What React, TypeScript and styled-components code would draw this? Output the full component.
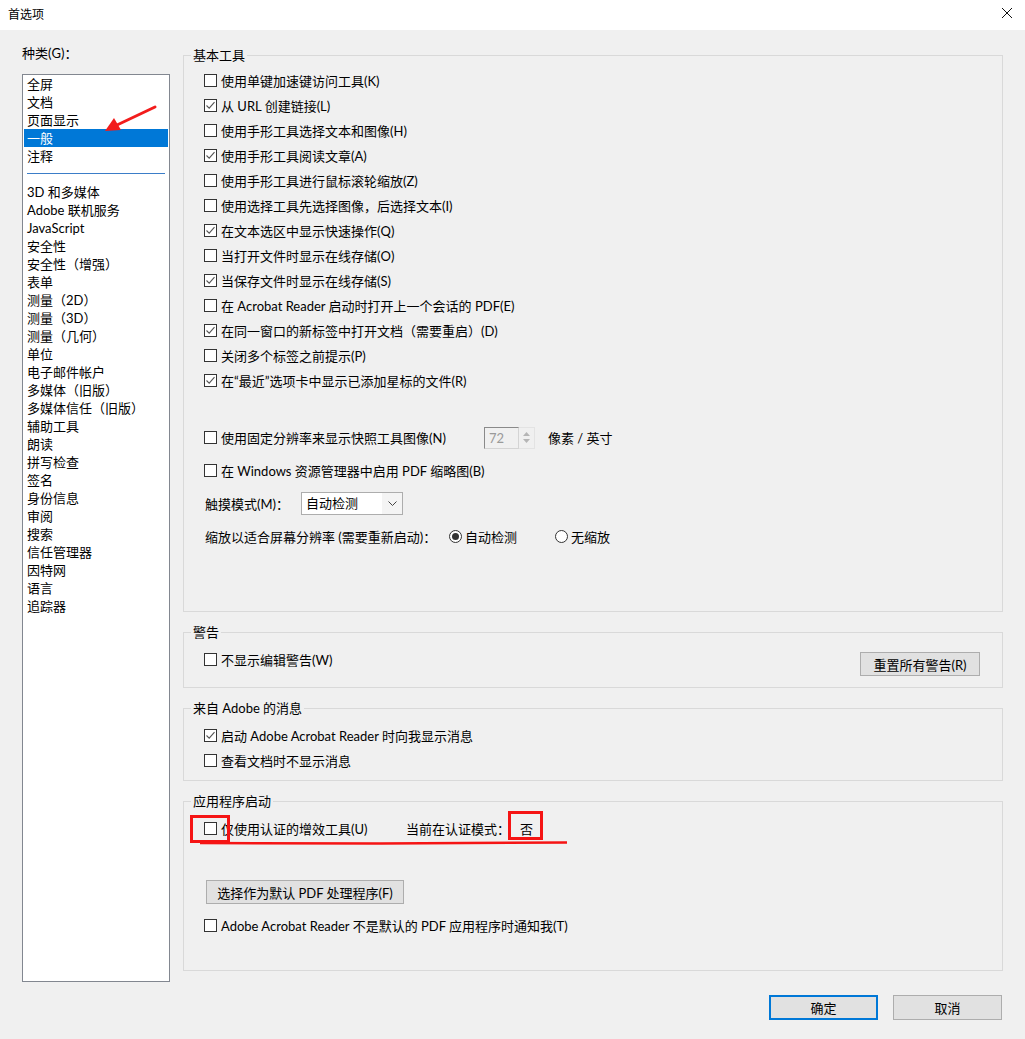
import React from "react";
import styled, { createGlobalStyle } from "styled-components";

const topCategories = ["全屏", "文档", "页面显示", "一般", "注释"];
const moreCategories = [
    "3D 和多媒体", "Adobe 联机服务", "JavaScript", "安全性", "安全性（增强）", "表单",
    "测量（2D）", "测量（3D）", "测量（几何）", "单位", "电子邮件帐户", "多媒体（旧版）",
    "多媒体信任（旧版）", "辅助工具", "朗读", "拼写检查", "签名", "身份信息", "审阅",
    "搜索", "信任管理器", "因特网", "语言", "追踪器",
];

const basicTools: [string, boolean][] = [
    ["使用单键加速键访问工具(K)", false],
    ["从 URL 创建链接(L)", true],
    ["使用手形工具选择文本和图像(H)", false],
    ["使用手形工具阅读文章(A)", true],
    ["使用手形工具进行鼠标滚轮缩放(Z)", false],
    ["使用选择工具先选择图像，后选择文本(I)", false],
    ["在文本选区中显示快速操作(Q)", true],
    ["当打开文件时显示在线存储(O)", false],
    ["当保存文件时显示在线存储(S)", true],
    ["在 Acrobat Reader 启动时打开上一个会话的 PDF(E)", false],
    ["在同一窗口的新标签中打开文档（需要重启）(D)", true],
    ["关闭多个标签之前提示(P)", false],
    ["在“最近”选项卡中显示已添加星标的文件(R)", true],
];

const CheckBox = ({ checked }: { checked?: boolean }) => (
    <StyledBox>
        {checked && (
            <svg width="11" height="11" viewBox="0 0 11 11">
                <polyline points="1.5,5.5 4.2,8.2 9.5,2.2" fill="none" stroke="#555" strokeWidth="1.1" />
            </svg>
        )}
    </StyledBox>
);

const Check = ({ label, checked, width }: { label: string; checked?: boolean; width?: number }) => (
    <CheckLabel $width={width}>
        <CheckBox checked={checked} />
        <span>{label}</span>
    </CheckLabel>
);

const Radio = ({ label, checked, width }: { label: string; checked?: boolean; width?: number }) => (
    <RadioLabel $width={width}>
        <RadioCircle>{checked && <RadioDot />}</RadioCircle>
        <span>{label}</span>
    </RadioLabel>
);

export default () => {
    return (
        <Page>
            <GlobalStyle />
            <TitleBar>
                <span>首选项</span>
                <svg width="12" height="12" viewBox="0 0 12 12" className="close">
                    <path d="M1 1 L11 11 M11 1 L1 11" stroke="#111" strokeWidth="1" />
                </svg>
            </TitleBar>

            <Body>
                <Sidebar>
                    <SideLabel>种类(G)：</SideLabel>
                    <CategoryList>
                        {topCategories.map(c => (
                            <CategoryItem key={c} $selected={c === "一般"}>{c}</CategoryItem>
                        ))}
                        <Divider />
                        {moreCategories.map(c => (
                            <CategoryItem key={c}>{c}</CategoryItem>
                        ))}
                    </CategoryList>
                </Sidebar>

                <Content>
                    <Group>
                        <Legend>基本工具</Legend>
                        <GroupBody $height={547}>
                            {basicTools.map(([label, checked]) => (
                                <Row key={label}>
                                    <Check label={label} checked={checked} />
                                </Row>
                            ))}
                            <Spacer $h={28} />
                            <Row $h={33}>
                                <Check label="使用固定分辨率来显示快照工具图像(N)" width={280} />
                                <SpinBox>
                                    <SpinInput>72</SpinInput>
                                    <SpinArrows>
                                        <svg width="7" height="4" viewBox="0 0 7 4"><polygon points="0,4 7,4 3.5,0" fill="#b5b5b5" /></svg>
                                        <svg width="7" height="4" viewBox="0 0 7 4"><polygon points="0,0 7,0 3.5,4" fill="#b5b5b5" /></svg>
                                    </SpinArrows>
                                </SpinBox>
                                <UnitText>像素 / 英寸</UnitText>
                            </Row>
                            <Row $h={33}>
                                <Check label="在 Windows 资源管理器中启用 PDF 缩略图(B)" />
                            </Row>
                            <Row $h={33}>
                                <FieldLabel $width={97}>触摸模式(M)：</FieldLabel>
                                <SelectBox>
                                    <span className="value">自动检测</span>
                                    <span className="arrow">
                                        <svg width="9" height="5" viewBox="0 0 9 5">
                                            <polyline points="0.5,0.5 4.5,4.5 8.5,0.5" fill="none" stroke="#444" strokeWidth="1" />
                                        </svg>
                                    </span>
                                </SelectBox>
                            </Row>
                            <Row $h={33}>
                                <FieldLabel $width={245}>缩放以适合屏幕分辨率 (需要重新启动)：</FieldLabel>
                                <Radio label="自动检测" checked width={106} />
                                <Radio label="无缩放" />
                            </Row>
                        </GroupBody>
                    </Group>

                    <Group>
                        <Legend>警告</Legend>
                        <GroupBody $height={46} $pad={6}>
                            <SplitRow>
                                <Row>
                                    <Check label="不显示编辑警告(W)" />
                                </Row>
                                <Button $width={120}>重置所有警告(R)</Button>
                            </SplitRow>
                        </GroupBody>
                    </Group>

                    <Group>
                        <Legend>来自 Adobe 的消息</Legend>
                        <GroupBody $height={63} $pad={6}>
                            <Row><Check label="启动 Adobe Acrobat Reader 时向我显示消息" checked /></Row>
                            <Row><Check label="查看文档时不显示消息" /></Row>
                        </GroupBody>
                    </Group>

                    <Group>
                        <Legend>应用程序启动</Legend>
                        <GroupBody $height={160} $pad={6}>
                            <Row>
                                <Check label="仅使用认证的增效工具(U)" width={201} />
                                <FieldLabel $width={115}>当前在认证模式：</FieldLabel>
                                <span>否</span>
                            </Row>
                            <Button $width={198} className="defaultHandler">选择作为默认 PDF 处理程序(F)</Button>
                            <Row className="notify">
                                <Check label="Adobe Acrobat Reader 不是默认的 PDF 应用程序时通知我(T)" />
                            </Row>
                        </GroupBody>
                    </Group>
                </Content>
            </Body>

            <Footer>
                <Button $width={109} $height={25} $primary>确定</Button>
                <Button $width={109} $height={25}>取消</Button>
            </Footer>

            <Annotations width="1025" height="1039" viewBox="0 0 1025 1039">
                <line x1="155" y1="107" x2="117" y2="125" stroke="#f21c1c" strokeWidth="3" strokeLinecap="round" />
                <polygon points="105,131 121,130 114,118" fill="#f21c1c" />
                <rect x="191.5" y="816.5" width="37" height="25" fill="none" stroke="#f51414" strokeWidth="3" />
                <rect x="509.5" y="812.5" width="32" height="26" fill="none" stroke="#f51414" strokeWidth="3" />
                <path d="M200 843 L380 843.5 L567 842.5" fill="none" stroke="#f51414" strokeWidth="2.5" />
            </Annotations>
        </Page>
    );
};

const GlobalStyle = createGlobalStyle`
    html, body {
        margin: 0;
        padding: 0;
        background: #f0f0f0;
    }
    body {
        font-family: Lato, "Noto Sans CJK SC", sans-serif;
        font-size: 13px;
        color: #000;
    }
`;

const Page = styled.div`
    position: relative;
    width: 1025px;
    height: 1039px;
    overflow: hidden;
    background: #f0f0f0;
    line-height: 18px;
`;

const TitleBar = styled.div`
    height: 30px;
    background: #fff;
    display: flex;
    align-items: center;
    justify-content: space-between;
    padding: 0 12px 0 8px;
    box-sizing: border-box;
    font-size: 12px;
    .close{
        margin-top: -4px;
    }
`;

const Body = styled.div`
    display: flex;
    align-items: flex-start;
    gap: 13px;
    padding: 14px 0 0 22px;
`;

const Sidebar = styled.div`
    width: 148px;
    display: flex;
    flex-flow: column nowrap;
`;

const SideLabel = styled.div`
    height: 18px;
    margin-bottom: 12px;
`;

const CategoryList = styled.div`
    height: 908px;
    box-sizing: border-box;
    background: #fff;
    border: 1px solid #828790;
`;

const CategoryItem = styled.div<{ $selected?: boolean }>`
    height: 18px;
    line-height: 18px;
    margin: 0 1px;
    padding-left: 3px;
    white-space: nowrap;
    background: ${({ $selected }) => ($selected ? "#0078d7" : "transparent")};
    color: ${({ $selected }) => ($selected ? "#fff" : "#000")};
`;

const Divider = styled.div`
    height: 18px;
    display: flex;
    align-items: center;
    padding: 0 4px;
    &::after{
        content: "";
        flex: 1;
        height: 1px;
        margin-top: -2px;
        background: #3b7dc8;
    }
`;

const Content = styled.div`
    width: 820px;
    margin-top: 2px;
    display: flex;
    flex-flow: column nowrap;
    gap: 11px;
`;

const Group = styled.fieldset`
    margin: 0;
    padding: 0 0 0 7px;
    border: 1px solid #d9d9d9;
    min-width: 0;
`;

const Legend = styled.legend`
    padding: 0 2px;
    line-height: 18px;
    font-size: 13px;
`;

const GroupBody = styled.div<{ $height: number; $pad?: number }>`
    height: ${({ $height }) => $height}px;
    box-sizing: border-box;
    padding: ${({ $pad }) => $pad ?? 4}px 22px 0 13px;
    display: flex;
    flex-flow: column nowrap;
    .defaultHandler{
        margin: 39px 0 0 2px;
    }
    .notify{
        margin-top: 9px;
    }
`;

const Row = styled.div<{ $h?: number }>`
    height: ${({ $h }) => $h ?? 25}px;
    display: flex;
    align-items: center;
    white-space: nowrap;
    flex-shrink: 0;
`;

const SplitRow = styled.div`
    display: flex;
    justify-content: space-between;
    align-items: flex-start;
    button{
        margin-top: 5px;
    }
`;

const Spacer = styled.div<{ $h: number }>`
    height: ${({ $h }) => $h}px;
    flex-shrink: 0;
`;

const CheckLabel = styled.label<{ $width?: number }>`
    display: flex;
    align-items: center;
    gap: 4px;
    ${({ $width }) => ($width ? `width: ${$width}px;` : "")}
`;

const StyledBox = styled.span`
    width: 13px;
    height: 13px;
    box-sizing: border-box;
    border: 1px solid #333;
    background: #fff;
    display: flex;
    align-items: center;
    justify-content: center;
    flex-shrink: 0;
`;

const RadioLabel = styled.label<{ $width?: number }>`
    display: flex;
    align-items: center;
    gap: 3px;
    ${({ $width }) => ($width ? `width: ${$width}px;` : "")}
`;

const RadioCircle = styled.span`
    width: 13px;
    height: 13px;
    box-sizing: border-box;
    border: 1px solid #333;
    border-radius: 50%;
    background: #fff;
    display: flex;
    align-items: center;
    justify-content: center;
`;

const RadioDot = styled.span`
    width: 7px;
    height: 7px;
    border-radius: 50%;
    background: #333;
`;

const FieldLabel = styled.span<{ $width: number }>`
    width: ${({ $width }) => $width}px;
    padding-left: 1px;
    box-sizing: border-box;
`;

const SpinBox = styled.div`
    display: flex;
    height: 22px;
`;

const SpinInput = styled.div`
    width: 35px;
    box-sizing: border-box;
    border: 1px solid;
    border-color: #8a8a8a #d4d4d4 #d4d4d4 #8a8a8a;
    color: #9a9a9a;
    padding-left: 4px;
    line-height: 20px;
`;

const SpinArrows = styled.div`
    width: 16px;
    display: flex;
    flex-flow: column nowrap;
    align-items: center;
    justify-content: space-around;
    padding: 3px 0;
    box-sizing: border-box;
    border: 1px solid #e3e3e3;
    border-left: none;
`;

const UnitText = styled.span`
    margin-left: 13px;
`;

const SelectBox = styled.div`
    width: 102px;
    height: 23px;
    box-sizing: border-box;
    border: 1px solid #adadad;
    background: #fff;
    display: flex;
    .value{
        flex: 1;
        padding-left: 4px;
        line-height: 21px;
    }
    .arrow{
        width: 20px;
        background: #f4f4f4;
        display: flex;
        align-items: center;
        justify-content: center;
    }
`;

const Button = styled.button<{ $width: number; $height?: number; $primary?: boolean }>`
    width: ${({ $width }) => $width}px;
    height: ${({ $height }) => $height ?? 24}px;
    padding: 0;
    box-sizing: border-box;
    font-family: inherit;
    font-size: 13px;
    color: #000;
    background: #e1e1e1;
    border: ${({ $primary }) => ($primary ? "2px solid #0078d7" : "1px solid #adadad")};
    flex-shrink: 0;
    align-self: flex-start;
`;

const Footer = styled.div`
    display: flex;
    justify-content: flex-end;
    gap: 15px;
    padding-right: 23px;
    margin-top: 13px;
`;

const Annotations = styled.svg`
    position: absolute;
    left: 0;
    top: 0;
    pointer-events: none;
`;
